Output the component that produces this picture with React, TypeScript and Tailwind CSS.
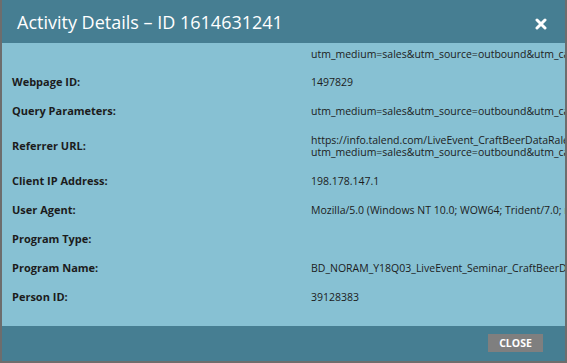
const rows: { label: string; values: string[] }[] = [
  { label: 'Webpage ID:', values: ['1497829'] },
  { label: 'Query Parameters:', values: ['utm_medium=sales&utm_source=outbound&utm_campaign=craftbeer'] },
  {
    label: 'Referrer URL:',
    values: [
      'https://info.talend.com/LiveEvent_CraftBeerDataRaleigh.html?',
      'utm_medium=sales&utm_source=outbound&utm_campaign=craftbeer',
    ],
  },
  { label: 'Client IP Address:', values: ['198.178.147.1'] },
  { label: 'User Agent:', values: ['Mozilla/5.0 (Windows NT 10.0; WOW64; Trident/7.0; rv:11.0) like Gecko'] },
  { label: 'Program Type:', values: [] },
  { label: 'Program Name:', values: ['BD_NORAM_Y18Q03_LiveEvent_Seminar_CraftBeerDataRaleigh'] },
  { label: 'Person ID:', values: ['39128383'] },
]

export default function App() {
  return (
    <div
      className="w-[567px] h-[363px] flex flex-col border-x-2 border-b-2 border-[#6d6d6d] overflow-hidden"
      style={{ fontFamily: '"Open Sans", "DejaVu Sans", sans-serif' }}
    >
      {/* header */}
      <div className="h-[43px] shrink-0 bg-[#467e92] flex items-center justify-between pl-[15px] pr-[18px]">
        <h1 className="text-[18px] font-medium text-white leading-none pt-[1px]">Activity Details – ID 1614631241</h1>
        <svg width="12" height="12" viewBox="0 0 12 12" className="mt-[5px]">
          <path d="M2 2 L10 10 M10 2 L2 10" stroke="white" strokeWidth="3" strokeLinecap="round" />
        </svg>
      </div>

      {/* body */}
      <div className="flex-1 bg-[#87c1d3] overflow-hidden text-[10.5px] leading-[12.5px] text-[#1c1c1c]">
        <div className="grid grid-cols-[309px_1fr] pt-[5px] pb-[7px]">
          <div />
          <div className="whitespace-nowrap overflow-hidden">utm_medium=sales&amp;utm_source=outbound&amp;utm_campaign=craftbeer</div>
        </div>
        {rows.map((r) => (
          <div key={r.label} className="grid grid-cols-[309px_1fr] items-center py-[8px] min-h-[29px]">
            <div className="pl-[10px] font-bold text-[11px]">{r.label}</div>
            <div className="whitespace-nowrap overflow-hidden">
              {r.values.map((v) => (
                <div key={v}>{v}</div>
              ))}
            </div>
          </div>
        ))}
      </div>

      {/* footer */}
      <div className="h-[35px] shrink-0 bg-[#467e92] flex justify-end items-start pt-[8px] pr-[22px]">
        <button className="w-[55px] h-[18px] bg-[#7f7f7f] text-white text-[10.5px] font-bold leading-none">CLOSE</button>
      </div>
    </div>
  )
}
